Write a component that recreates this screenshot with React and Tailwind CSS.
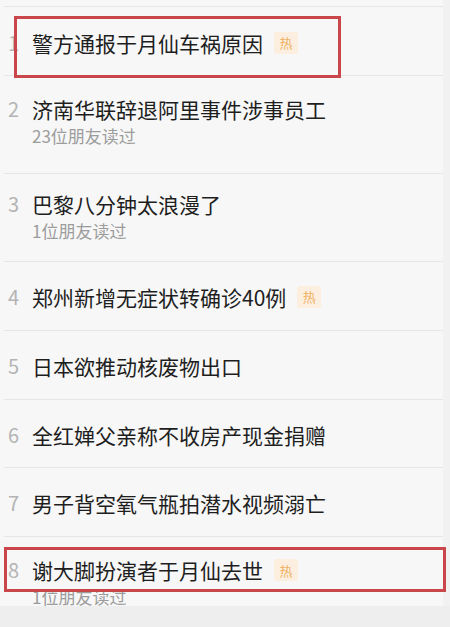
import React from "react";

const FONT = { fontFamily: '"Noto Sans CJK SC", "Noto Sans", sans-serif' };

function Hot() {
  return (
    <span className="ml-[11px] flex h-[22px] w-[24px] items-center justify-center rounded-[2px] bg-[#fcefdf] text-[13px] leading-none text-[#efb368]">
      热
    </span>
  );
}

function Row({ n, title, sub, hot, cls }) {
  return (
    <div className={`flex border-b border-[#e6e6e6] ${cls}`}>
      <div className="w-[28px] shrink-0 pl-[4px] text-[20px] leading-[28px] text-[#b4b4b4]">{n}</div>
      <div className="flex flex-col">
        <div className="flex items-center">
          <span className="text-[21px] leading-[28px] text-[#1e1e1e]">{title}</span>
          {hot && <Hot />}
        </div>
        {sub && <div className="mt-[2px] text-[17px] leading-[22px] text-[#9c9c9c]">{sub}</div>}
      </div>
    </div>
  );
}

export default function App() {
  return (
    <div className="relative h-[627px] w-[450px] overflow-hidden bg-[#f7f7f7]" style={FONT}>
      <div className="flex h-[606px] overflow-hidden">
        <div className="w-[443px] shrink-0 pl-[4px]">
          <div className="h-[7px] border-b border-[#e6e6e6]" />
          <Row n="1" title="警方通报于月仙车祸原因" hot cls="h-[69px] items-center pt-[3px]" />
          <Row n="2" title="济南华联辞退阿里事件涉事员工" sub="23位朋友读过" cls="h-[98px] pt-[19px]" />
          <Row n="3" title="巴黎八分钟太浪漫了" sub="1位朋友读过" cls="h-[88px] pt-[16px]" />
          <Row n="4" title="郑州新增无症状转确诊40例" hot cls="h-[69px] items-center pt-[1px]" />
          <Row n="5" title="日本欲推动核废物出口" cls="h-[69px] items-center pt-[2px]" />
          <Row n="6" title="全红婵父亲称不收房产现金捐赠" cls="h-[68px] items-center pt-[2px]" />
          <Row n="7" title="男子背空氧气瓶拍潜水视频溺亡" cls="h-[69px] items-center pt-[1px]" />
          <Row n="8" title="谢大脚扮演者于月仙去世" sub="1位朋友读过" hot cls="h-[90px] pt-[19px]" />
        </div>
        <div className="flex-1 bg-[#f1f1f1]" />
      </div>
      <div className="h-[21px] bg-[#eeeeee]" />

      <div className="absolute left-[14px] top-[16px] h-[62px] w-[327px] border-[3px] border-[#c9474b]" />
      <div className="absolute left-[4px] top-[547px] h-[45px] w-[442px] border-[3px] border-[#c9474b]" />
    </div>
  );
}
